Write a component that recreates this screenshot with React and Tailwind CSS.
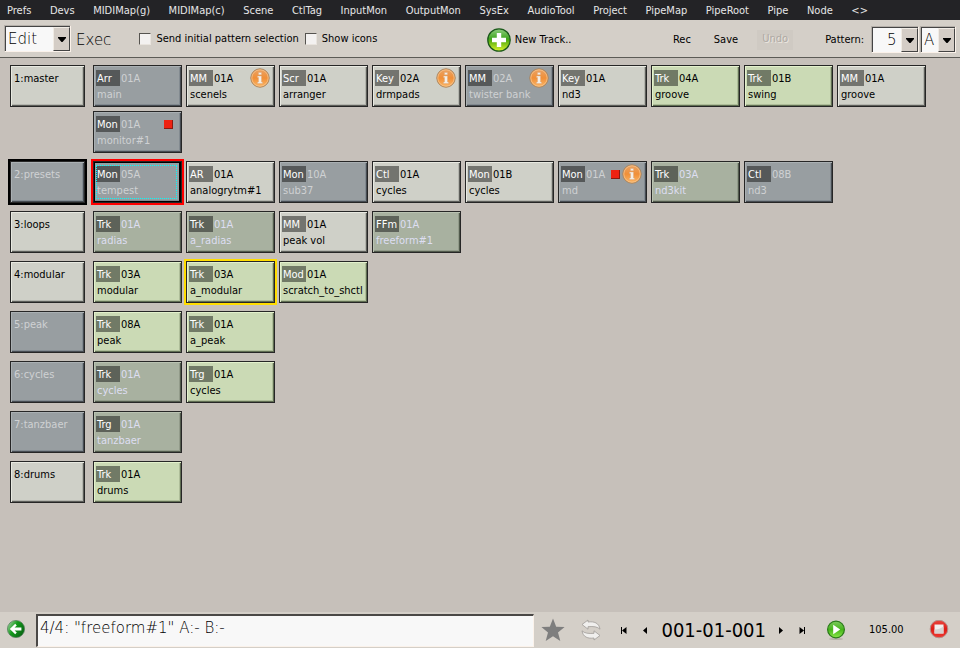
import React, { useState } from "react";

const MENUS = [
  "Prefs", "Devs", "MIDIMap(g)", "MIDIMap(c)", "Scene", "CtlTag", "InputMon", "OutputMon",
  "SysEx", "AudioTool", "Project", "PipeMap", "PipeRoot", "Pipe", "Node", "<>",
];

// Each node: [tag, pattern, name, tone, extras]
const TRACKS = [
  {
    name: "1:master",
    nodes: [
      ["Arr", "01A", "main", "off"],
      ["MM", "01A", "scenels", "on", { info: true }],
      ["Scr", "01A", "arranger", "on"],
      ["Key", "02A", "drmpads", "on", { info: true }],
      ["MM", "02A", "twister bank", "off", { info: true }],
      ["Key", "01A", "nd3", "on"],
      ["Trk", "04A", "groove", "green"],
      ["Trk", "01B", "swing", "green"],
      ["MM", "01A", "groove", "on"],
      ["Mon", "01A", "monitor#1", "off", { rec: true }],
    ],
  },
  {
    name: "2:presets",
    off: true,
    selected: true,
    nodes: [
      ["Mon", "05A", "tempest", "off", { focus: true }],
      ["AR", "01A", "analogrytm#1", "on"],
      ["Mon", "10A", "sub37", "off"],
      ["Ctl", "01A", "cycles", "on"],
      ["Mon", "01B", "cycles", "on"],
      ["Mon", "01A", "md", "off", { rec: true, info: true }],
      ["Trk", "03A", "nd3kit", "dim"],
      ["Ctl", "08B", "nd3", "off"],
    ],
  },
  {
    name: "3:loops",
    nodes: [
      ["Trk", "01A", "radias", "dim"],
      ["Trk", "01A", "a_radias", "dim"],
      ["MM", "01A", "peak vol", "on"],
      ["FFm", "01A", "freeform#1", "dim"],
    ],
  },
  {
    name: "4:modular",
    nodes: [
      ["Trk", "03A", "modular", "green"],
      ["Trk", "03A", "a_modular", "green", { marked: true }],
      ["Mod", "01A", "scratch_to_shctl", "green"],
    ],
  },
  { name: "5:peak", off: true, nodes: [["Trk", "08A", "peak", "green"], ["Trk", "01A", "a_peak", "green"]] },
  { name: "6:cycles", off: true, nodes: [["Trk", "01A", "cycles", "dim"], ["Trg", "01A", "cycles", "green"]] },
  { name: "7:tanzbaer", off: true, nodes: [["Trg", "01A", "tanzbaer", "dim"]] },
  { name: "8:drums", nodes: [["Trk", "01A", "drums", "green"]] },
];

const TONES = {
  on: "bg-[#cfd0c8] text-black shadow-[inset_1px_1px_#e8e9e1,inset_-1px_-1px_#5c5d59,inset_-2px_-2px_#b4b5ae]",
  off: "bg-[#989ea1] text-[#cfd1d3] shadow-[inset_1px_1px_#aab0b3,inset_-1px_-1px_#474c52,inset_-2px_-2px_#828a90]",
  green: "bg-[#cbdab5] text-black shadow-[inset_1px_1px_#e3f1cc,inset_-1px_-1px_#5f6d52,inset_-2px_-2px_#aebd99]",
  dim: "bg-[#a8b1a0] text-[#dddef2] shadow-[inset_1px_1px_#bac3b2,inset_-1px_-1px_#515a4c,inset_-2px_-2px_#929b8a]",
};

const TAGS = {
  on: "bg-[#73746f]",
  off: "bg-[#555859]",
  green: "bg-[#717a66]",
  dim: "bg-[#5d6259]",
};

function InfoIcon() {
  return (
    <svg viewBox="0 0 20 20" className="size-5" aria-label="info">
      <defs>
        <linearGradient id="info" x1="0" y1="0" x2="0" y2="1">
          <stop offset="0" stopColor="#e9a468" />
          <stop offset="0.5" stopColor="#f08f38" />
          <stop offset="1" stopColor="#fbb666" />
        </linearGradient>
      </defs>
      <circle cx="10" cy="10" r="9.2" fill="url(#info)" stroke="#a8835c" />
      <circle cx="10" cy="10" r="8.2" fill="none" stroke="#f6c48d" strokeWidth="0.8" />
      <path d="M8.5 4.5h3v2.3h-3zM7.5 8h4v6h1v1.5h-5V14h1V9.400h-1z" fill="#f3eee6" stroke="#d9a77c" strokeWidth="0.4" />
    </svg>
  );
}

function Node({ node }) {
  const [tag, pattern, name, tone, extra = {}] = node;
  const ring = extra.focus
    ? "outline-2 outline-[#ff0000]"
    : extra.marked
      ? "outline-2 outline-[#ffdd00]"
      : "";
  return (
    <button
      type="button"
      className={`relative flex h-[42px] w-[89px] flex-col border border-[#262626] px-0.5 pt-1 text-left leading-[18px] ${TONES[tone]} ${ring}`}
    >
      <span className="flex h-4">
        <span className={`h-4 w-6 pl-px text-white ${TAGS[tone]}`}>{tag}</span>
        <span className="h-4 pl-px">{pattern}</span>
      </span>
      <span className="pl-px whitespace-nowrap">{name}</span>
      {(extra.rec || extra.info) && (
        <span className="absolute top-0.5 right-1 flex h-5 items-center gap-0.5">
          {extra.rec && (
            <span className={`size-[9px] border-r border-b border-[#8a1a10] bg-[#ee2211] ${extra.info ? "" : "mr-1"}`} />
          )}
          {extra.info && <InfoIcon />}
        </span>
      )}
      {extra.focus && (
        <>
          <span className="absolute inset-0 border border-r-2 border-black" />
          <span className="absolute top-[3px] right-1 bottom-[3px] left-0.5 border border-dotted border-[#00ffff]" />
        </>
      )}
    </button>
  );
}

function Track({ track }) {
  return (
    <section className="flex gap-2">
      <button
        type="button"
        className={`flex h-[42px] w-[75px] shrink-0 border border-[#262626] px-[3px] pt-1 text-left leading-[18px] ${track.off ? TONES.off : TONES.on} ${track.selected ? "outline-2 outline-black" : ""}`}
      >
        {track.name}
      </button>
      <div className="flex flex-wrap gap-1">
        {track.nodes.map((n, i) => (
          <Node key={i} node={n} />
        ))}
      </div>
    </section>
  );
}

function Combo({ label, options, className }) {
  return (
    <div className={`relative border border-[#b4afa9] border-r-[#fbf2ea] border-b-[#fbf2ea] ${className}`}>
      <select
        aria-label={label}
        className="block h-[25px] w-full appearance-none border-t border-l border-[#444] bg-[#f8f8f8] pl-0.5 font-['DejaVu_Sans',sans-serif] text-[15px] font-extralight text-black outline-none"
      >
        {options.map((o) => (
          <option key={o}>{o}</option>
        ))}
      </select>
      <span className="pointer-events-none absolute top-px right-0 bottom-0 flex w-[17px] items-center justify-center border border-[#f0ebe4] border-r-[#444] border-b-[#444] bg-[#d4cdc6]">
        <svg viewBox="0 0 8 5" className="h-[5px] w-2" fill="#000" aria-hidden="true">
          <path d="M0 0h8v1L4.500 5h-1L0 1z" />
        </svg>
      </span>
    </div>
  );
}

function Check({ label }) {
  const [on, setOn] = useState(false);
  return (
    <label className="flex items-center gap-[5px]">
      <input
        type="checkbox"
        checked={on}
        onChange={(e) => setOn(e.target.checked)}
        className="size-3 appearance-none border border-[#55534f] border-r-[#e9e4de] border-b-[#e9e4de] bg-[#f3f1f0] checked:bg-[#555]"
      />
      <span className="pt-0.5">{label}</span>
    </label>
  );
}

function Toolbar() {
  return (
    <header className="flex h-[38px] items-center border-b border-[#5c5b56] bg-[#d4cfc8]">
      <Combo label="Mode" options={["Edit", "Play"]} className="ml-1 w-[67px]" />
      <button type="button" className="ml-[5px] pt-1 font-['DejaVu_Sans',sans-serif] text-[15px] font-extralight">
        Exec
      </button>
      <div className="ml-7 flex gap-1.5">
        <Check label="Send initial pattern selection" />
        <Check label="Show icons" />
      </div>
      <button type="button" className="mx-auto flex items-center gap-1 pt-0.5 pl-2">
        <svg viewBox="0 0 24 24" className="size-6" aria-hidden="true">
          <defs>
            <linearGradient id="add" x1="0" y1="0" x2="0" y2="1">
              <stop offset="0" stopColor="#8fce80" />
              <stop offset="0.45" stopColor="#3fa51e" />
              <stop offset="0.55" stopColor="#5cb010" />
              <stop offset="1" stopColor="#dcf52a" />
            </linearGradient>
          </defs>
          <circle cx="12" cy="12" r="11.2" fill="url(#add)" stroke="#1d5a1c" strokeWidth="1.3" />
          <path d="M9.800 5h4.400v4.800H19v4.400h-4.800V19H9.800v-4.800H5V9.800h4.800z" fill="#fff" />
        </svg>
        <span className="pt-0.5">New Track..</span>
      </button>
      <div className="flex items-center pt-0.5 pr-1">
        <button type="button" className="pt-0.5">Rec</button>
        <button type="button" className="ml-[23px] pt-0.5">Save</button>
        <button
          type="button"
          disabled
          className="ml-[19px] h-5 w-9 bg-[#cfcac3] text-[#aea9a3] text-shadow-[1px_1px_#ece7e0]"
        >
          Undo
        </button>
        <span className="ml-8 pt-0.5">Pattern:</span>
        <Combo label="Pattern number" options={["5", "6", "7"]} className="ml-[7px] w-12 [&>select]:pl-3.5" />
        <Combo label="Pattern bank" options={["A", "B", "C"]} className="ml-px w-9" />
      </div>
    </header>
  );
}

function Step({ label, children }) {
  return (
    <button type="button" aria-label={label} className="flex w-3 justify-center">
      <svg viewBox="0 0 7 7" className="size-[7px]" fill="#000" aria-hidden="true">
        {children}
      </svg>
    </button>
  );
}

function Transport() {
  return (
    <footer className="flex h-9 items-center bg-[#d4cfc8] pl-1.5">
      <button type="button" aria-label="Back">
        <svg viewBox="0 0 20 20" className="size-5" aria-hidden="true">
          <defs>
            <linearGradient id="back" x1="0" y1="0.2" x2="1" y2="0.8">
              <stop offset="0" stopColor="#9ad09a" />
              <stop offset="0.4" stopColor="#159a1c" />
              <stop offset="1" stopColor="#066012" />
            </linearGradient>
          </defs>
          <circle cx="10" cy="9" r="8.600" fill="url(#back)" stroke="#51785a" strokeWidth="0.7" />
          <path d="M3.800 9l5.400-5.200 1.600 1.600-2.200 2.200h6.800v2.800H8.600l2.200 2.200-1.600 1.600z" fill="#fff" />
        </svg>
      </button>
      <input
        aria-label="Status"
        readOnly
        value={'4/4: "freeform#1" A:- B:-'}
        className="ml-2.5 h-[33px] min-w-0 flex-1 border-t-2 border-l-2 border-[#4a4846] border-r border-r-[#fbf2ea] border-b border-b-[#fbf2ea] bg-[#f8f8f8] pb-1.5 pl-0.5 font-['DejaVu_Sans',sans-serif] text-[15px] font-extralight text-black outline-none"
      />
      <div className="ml-1.5 flex items-center">
        <button type="button" aria-label="Favourite">
          <svg viewBox="0 0 26 26" className="size-[26px]" fill="#7e7e7e" aria-hidden="true">
            <path d="M13 1.500l3.200 8.200 8.400.4-6.600 5.300 2.300 8.500L13 19.200l-7.300 4.700L8 15.400 1.400 10.100l8.400-.4z" />
          </svg>
        </button>
        <button type="button" aria-label="Sync" className="ml-3.5">
          <svg viewBox="-1 0 22 22" className="size-[22px]" fill="#f0efed" stroke="#9f9c98" strokeWidth="0.8" strokeLinejoin="round" aria-hidden="true">
            <path d="M1 5.500L7 1v2c6-.8 11 .8 12 7.200-2.500-2.500-6.500-3-12-2.500v2.500z" />
            <path d="M19 16.500L13 21v-2c-6 .8-11-.8-12-7.200 2.500 2.500 6.500 3 12 2.500v-2.500z" />
          </svg>
        </button>
        <div className="ml-[15px] flex gap-2.5">
          <Step label="To start"><path d="M1 0h1v7H1zM6.500 0v7L2 3.500z" /></Step>
          <Step label="Step back"><path d="M5 0v7L1 3.500z" /></Step>
        </div>
        <output className="mr-2 ml-2.5 text-xl leading-6">001-01-001</output>
        <div className="flex gap-2.5">
          <Step label="Step forward"><path d="M2 0v7l4-3.500z" /></Step>
          <Step label="To end"><path d="M5 0h1v7H5zM.5 0v7L5 3.500z" /></Step>
        </div>
        <button type="button" aria-label="Play" className="ml-[18px]">
          <svg viewBox="0 0 20 20" className="size-5" aria-hidden="true">
            <defs>
              <linearGradient id="play" x1="0" y1="0" x2="0" y2="1">
                <stop offset="0" stopColor="#7ccb5f" />
                <stop offset="0.5" stopColor="#46b41b" />
                <stop offset="1" stopColor="#8be84a" />
              </linearGradient>
            </defs>
            <ellipse cx="10" cy="19" rx="7" ry="1" fill="#b5b0a9" />
            <circle cx="10" cy="9.500" r="8.400" fill="url(#play)" stroke="#2b7a1b" strokeWidth="1.200" />
            <path d="M7.200 4.800v9.400l7-4.700z" fill="#fff" />
          </svg>
        </button>
        <output className="w-[83px] pl-[23px]">105.00</output>
        <button type="button" aria-label="Stop" className="mr-[11px]">
          <svg viewBox="0 0 20 20" className="size-5" aria-hidden="true">
            <defs>
              <linearGradient id="stop" x1="0" y1="0" x2="0" y2="1">
                <stop offset="0" stopColor="#e8473f" />
                <stop offset="0.500" stopColor="#dd1d17" />
                <stop offset="1" stopColor="#ee3b33" />
              </linearGradient>
            </defs>
            <circle cx="10" cy="9" r="8.800" fill="url(#stop)" stroke="#b58f8b" strokeWidth="1" />
            <path d="M5.500 4.500h9v9h-9z" fill="#f1efee" />
            <path d="M5.500 13.500v-4c4 0 6-1 9-3v7z" fill="#d6d2d0" />
          </svg>
        </button>
      </div>
    </footer>
  );
}

export default function App() {
  return (
    <div className="flex min-h-screen flex-col bg-[#c6c0ba] font-['DejaVu_Sans_Condensed','DejaVu_Sans',sans-serif] text-[11px] text-black">
      <nav className="h-5 bg-[#232326] pl-[7px] text-[#e6e6e6]">
        <div className="flex h-full max-w-[861px] items-center justify-between pt-0.5">
          {MENUS.map((m) => (
            <button key={m} type="button">{m}</button>
          ))}
        </div>
      </nav>
      <Toolbar />
      <main className="flex flex-1 flex-col gap-2 px-2.5 pt-[7px]">
        {TRACKS.map((t) => (
          <Track key={t.name} track={t} />
        ))}
      </main>
      <Transport />
    </div>
  );
}
